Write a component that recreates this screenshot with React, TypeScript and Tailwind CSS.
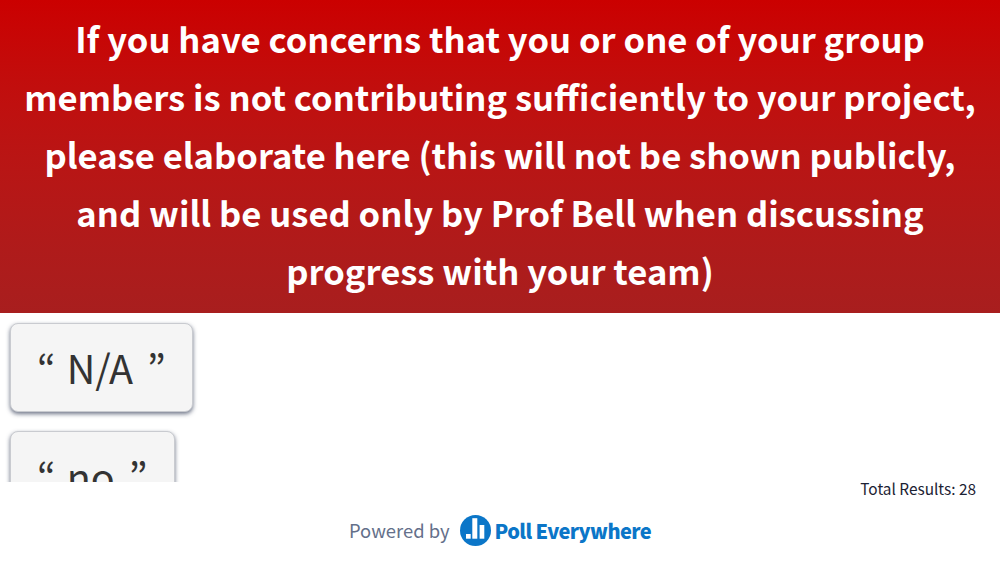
const FONT = 'font-["Noto_Sans_CJK_JP","Noto_Sans",sans-serif]';

function Logo() {
  return (
    <svg width="31" height="31" viewBox="0 0 31 31" className="shrink-0">
      <circle cx="15.5" cy="15.5" r="15.5" fill="#0b76c8" />
      <rect x="6" y="19" width="4.7" height="4.7" fill="#fff" />
      <rect x="12.3" y="3.2" width="5" height="20.5" fill="#fff" />
      <rect x="19.6" y="10" width="4.7" height="13.7" fill="#fff" />
    </svg>
  );
}

function ResponseCard({ text }: { text: string }) {
  return (
    <div className="flex w-fit rounded-lg border border-[#c9cbd0] bg-[#f5f5f5] px-[26px] pt-[17px] pb-[19px] text-[39.5px] leading-[51px] text-[#333] shadow-[0_2px_4px_rgba(50,60,85,0.7)]">
      <span>“</span>
      <span className="mr-[14px] ml-[11px]">{text}</span>
      <span>”</span>
    </div>
  );
}

export default function App() {
  return (
    <div className={`${FONT} flex h-[562px] w-[1000px] flex-col overflow-hidden bg-white`}>
      <header className="flex h-[313px] shrink-0 items-center justify-center bg-gradient-to-b from-[#cb0000] to-[#a81e1e] px-5">
        <h1 className="-mt-[6px] text-center text-[34.6px] leading-[58px] font-bold text-white">
          If you have concerns that you or one of your group members is not contributing sufficiently to your project, please elaborate here (this will not be shown publicly, and will be used only by Prof Bell when discussing progress with your team)
        </h1>
      </header>
      <main className="flex h-[169px] shrink-0 flex-col gap-[19px] overflow-hidden px-2.5 pt-2.5">
        <ResponseCard text="N/A" />
        <ResponseCard text="no" />
      </main>
      <footer className="flex flex-1 flex-col">
        <div className="-mt-px pr-6 text-right text-[15.4px] leading-[15px] text-[#1c2233]">Total Results: 28</div>
        <div className="mt-[19px] flex items-center justify-center gap-[10px]">
          <span className="text-[18.4px] text-[#64708a]">Powered by</span>
          <span className="flex items-center gap-[4px]">
            <Logo />
            <span className="text-[20px] font-black tracking-[-0.6px] text-[#0b76c8]">Poll Everywhere</span>
          </span>
        </div>
      </footer>
    </div>
  );
}
